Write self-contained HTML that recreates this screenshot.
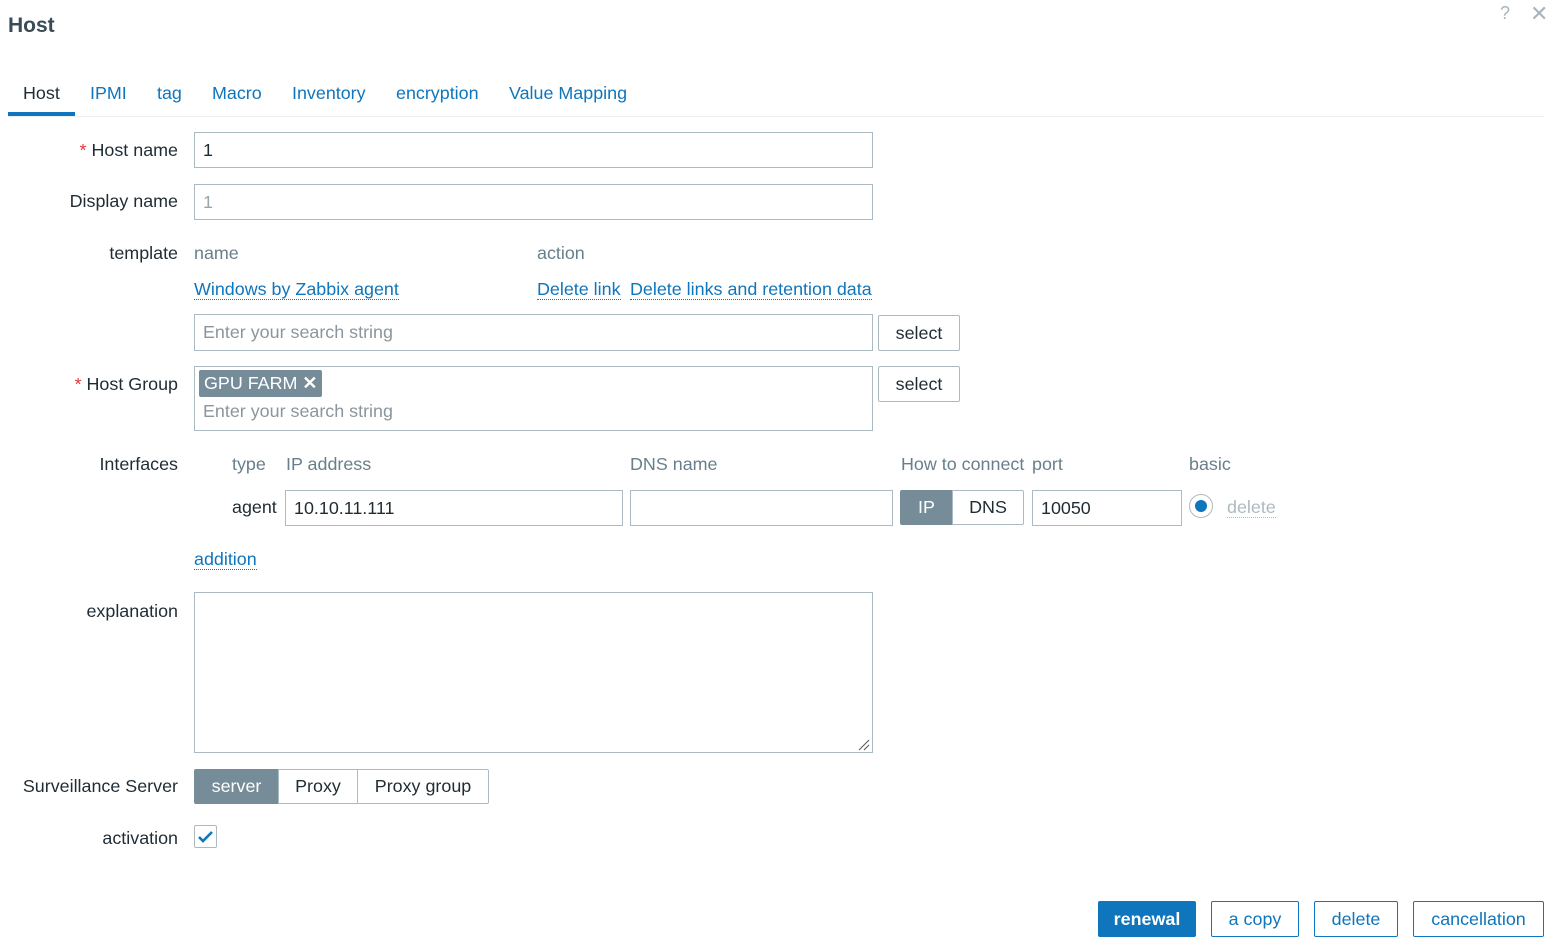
<!DOCTYPE html>
<html><head><meta charset="utf-8"><style>
body{margin:0;width:1552px;height:948px;background:#fff;font-family:"Liberation Sans",Arial,sans-serif;font-size:17.9px;color:#1f2c33;position:relative;overflow:hidden}
.a{position:absolute;white-space:nowrap}
.lbl{position:absolute;right:1374px;white-space:nowrap}
.req:before{content:"* ";color:#e33734}
.in{position:absolute;border:1px solid #acbbc2;box-sizing:border-box;background:#fff;padding-left:8px;display:flex;align-items:center}
.lnk{color:#0f75bc;border-bottom:1px dotted #0f75bc;position:absolute;white-space:nowrap;line-height:20px}
.gr{color:#687f8b}
.btn{position:absolute;border:1px solid #acbbc2;border-radius:2px;box-sizing:border-box;display:flex;align-items:center;justify-content:center;background:#fff}
.bb{position:absolute;border:1px solid #0f75bc;border-radius:2px;box-sizing:border-box;display:flex;align-items:center;justify-content:center;color:#0f75bc;background:#fff;height:36px;top:901px}
</style></head><body>
<div class="a" style="left:8px;top:14px;font-size:21px;font-weight:bold;color:#384b56">Host</div>
<div class="a" style="left:1500px;top:3px;color:#aab5bb;font-size:18px">?</div>
<div class="a" style="left:1530px;top:1px;color:#aab5bb;font-size:22px">✕</div>

<div class="a" style="left:23px;top:83px;color:#1f2c33">Host</div>
<div class="a" style="left:90px;top:83px;color:#0f75bc">IPMI</div>
<div class="a" style="left:157px;top:83px;color:#0f75bc">tag</div>
<div class="a" style="left:212px;top:83px;color:#0f75bc">Macro</div>
<div class="a" style="left:292px;top:83px;color:#0f75bc">Inventory</div>
<div class="a" style="left:396px;top:83px;color:#0f75bc">encryption</div>
<div class="a" style="left:509px;top:83px;color:#0f75bc">Value Mapping</div>
<div class="a" style="left:8px;top:112px;width:67px;height:4px;background:#0f75bc"></div>
<div class="a" style="left:8px;top:116px;width:1536px;height:1px;background:#ebeef0"></div>

<div class="lbl req" style="top:140px">Host name</div>
<div class="in" style="left:194px;top:132px;width:679px;height:36px">1</div>
<div class="lbl" style="top:191px">Display name</div>
<div class="in" style="left:194px;top:184px;width:679px;height:36px;color:#9aa5ab">1</div>

<div class="lbl" style="top:243px">template</div>
<div class="a gr" style="left:194px;top:243px">name</div>
<div class="a gr" style="left:537px;top:243px">action</div>
<div class="lnk" style="left:194px;top:279px">Windows by Zabbix agent</div>
<div class="lnk" style="left:537px;top:279px">Delete link</div>
<div class="lnk" style="left:630px;top:279px">Delete links and retention data</div>
<div class="in" style="left:194px;top:314px;width:679px;height:37px;color:#8a969c">Enter your search string</div>
<div class="btn" style="left:878px;top:315px;width:82px;height:36px">select</div>

<div class="lbl req" style="top:374px">Host Group</div>
<div class="in" style="left:194px;top:366px;width:679px;height:65px;display:block;padding:3px 0 0 4px">
<div style="display:inline-block;background:#768d99;color:#fff;border-radius:2px;padding:1px 5px;height:25px;line-height:25px">GPU FARM <b>✕</b></div>
<div style="color:#8a969c;margin:4px 0 0 4px">Enter your search string</div></div>
<div class="btn" style="left:878px;top:366px;width:82px;height:36px">select</div>

<div class="lbl" style="top:454px">Interfaces</div>
<div class="a gr" style="left:232px;top:454px">type</div>
<div class="a gr" style="left:286px;top:454px">IP address</div>
<div class="a gr" style="left:630px;top:454px">DNS name</div>
<div class="a gr" style="left:901px;top:454px">How to connect</div>
<div class="a gr" style="left:1032px;top:454px">port</div>
<div class="a gr" style="left:1189px;top:454px">basic</div>
<div class="a" style="left:232px;top:497px">agent</div>
<div class="in" style="left:285px;top:490px;width:338px;height:36px">10.10.11.111</div>
<div class="in" style="left:630px;top:490px;width:263px;height:36px"></div>
<div class="btn" style="left:900px;top:490px;width:53px;height:35px;background:#768d99;color:#fff;border-color:#768d99;border-radius:2px 0 0 2px">IP</div>
<div class="btn" style="left:952px;top:490px;width:72px;height:35px;border-radius:0 2px 2px 0">DNS</div>
<div class="in" style="left:1032px;top:490px;width:150px;height:36px">10050</div>
<div class="a" style="left:1189px;top:494px;width:24px;height:24px;border:1px solid #acbbc2;border-radius:50%;box-sizing:border-box"><div style="position:absolute;left:5px;top:5px;width:12px;height:12px;border-radius:50%;background:#0f75bc"></div></div>
<div class="lnk" style="left:1227px;top:497px;color:#acbbc2;border-color:#acbbc2">delete</div>
<div class="lnk" style="left:194px;top:549px">addition</div>

<div class="lbl" style="top:601px">explanation</div>
<div class="in" style="left:194px;top:592px;width:679px;height:161px"></div>
<svg class="a" style="left:857px;top:738px" width="14" height="14"><path d="M2 12L12 2M7 12L12 7" stroke="#555" stroke-width="1"/></svg>

<div class="lbl" style="top:776px">Surveillance Server</div>
<div class="btn" style="left:194px;top:769px;width:85px;height:35px;background:#768d99;color:#fff;border-color:#768d99;border-radius:2px 0 0 2px">server</div>
<div class="btn" style="left:278px;top:769px;width:80px;height:35px;border-radius:0">Proxy</div>
<div class="btn" style="left:357px;top:769px;width:132px;height:35px;border-radius:0 2px 2px 0">Proxy group</div>

<div class="lbl" style="top:828px">activation</div>
<div class="a" style="left:194px;top:825px;width:23px;height:23px;border:1px solid #acbbc2;border-radius:2px;box-sizing:border-box"><svg width="21" height="21"><path d="M4 11l4 4 9-9" stroke="#0f75bc" stroke-width="2.6" fill="none"/></svg></div>

<div class="bb" style="left:1098px;width:98px;background:#0f75bc;color:#fff;font-weight:bold">renewal</div>
<div class="bb" style="left:1211px;width:88px">a copy</div>
<div class="bb" style="left:1314px;width:84px">delete</div>
<div class="bb" style="left:1413px;width:131px">cancellation</div>
</body></html>
